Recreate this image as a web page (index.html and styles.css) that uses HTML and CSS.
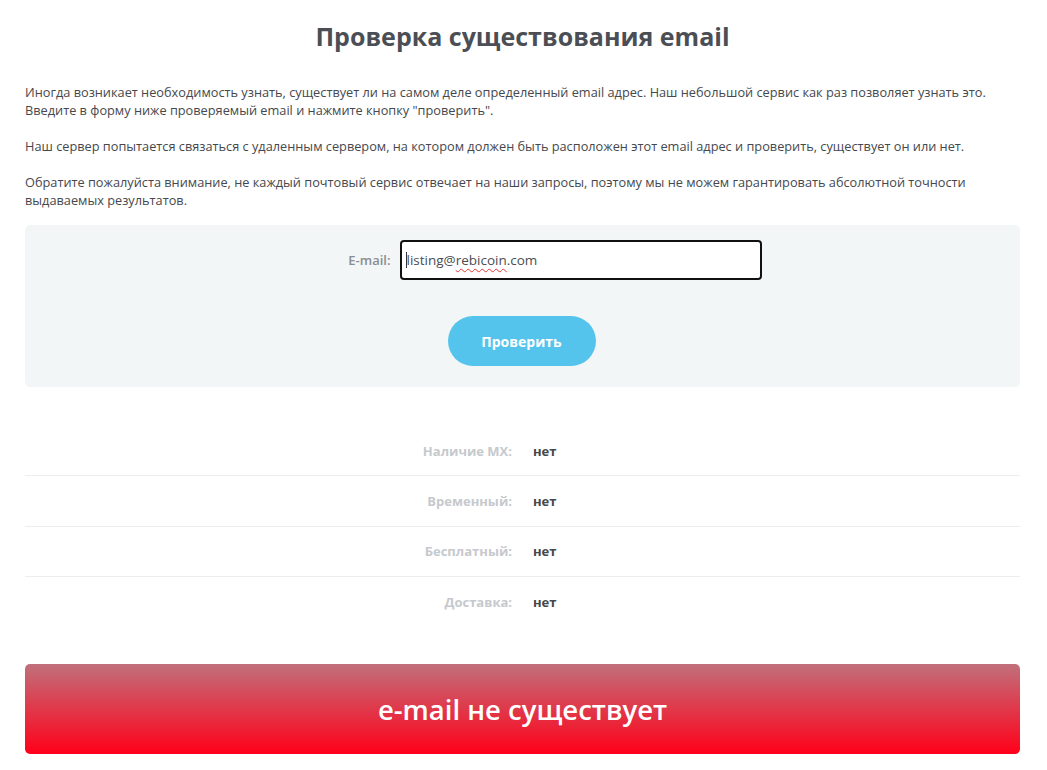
FILE: index.html
```html
<!DOCTYPE html>
<html lang="ru">
<head>
<meta charset="utf-8">
<title>Проверка существования email</title>
<link rel="stylesheet" href="styles.css">
</head>
<body>
<main class="page">
  <h1 class="title">Проверка существования email</h1>
  <div class="intro">
    <p>Иногда возникает необходимость узнать, существует ли на самом деле определенный email адрес. Наш небольшой сервис как раз позволяет узнать это. Введите в форму ниже проверяемый email и нажмите кнопку "проверить".</p>
    <p>Наш сервер попытается связаться с удаленным сервером, на котором должен быть расположен этот email адрес и проверить, существует он или нет.</p>
    <p>Обратите пожалуйста внимание, не каждый почтовый сервис отвечает на наши запросы, поэтому мы не можем гарантировать абсолютной точности выдаваемых результатов.</p>
  </div>
  <form class="form">
    <div class="field">
      <label class="label" for="email">E-mail:</label>
      <div class="input"><span class="caret"></span>listing@<span class="spell">rebicoin</span>.com</div>
    </div>
    <button type="button" class="btn">Проверить</button>
  </form>
  <div class="results">
    <div class="row"><div class="key">Наличие MX:</div><div class="val">нет</div></div>
    <div class="row"><div class="key">Временный:</div><div class="val">нет</div></div>
    <div class="row"><div class="key">Бесплатный:</div><div class="val">нет</div></div>
    <div class="row"><div class="key">Доставка:</div><div class="val">нет</div></div>
  </div>
  <div class="verdict">e-mail не существует</div>
</main>
</body>
</html>
```

FILE: styles.css
```css
* { box-sizing: border-box; }
html, body { margin: 0; padding: 0; background: #fff; }
body { font-family: "Open Sans", "Noto Sans", sans-serif; color: #45484d; }
.page { width: 995px; margin: 0 0 0 25px; padding-top: 18px; }
.title {
  margin: 0;
  text-align: center;
  font-size: 25px;
  line-height: 36px;
  font-weight: 700;
  color: #4b4f55;
}
.intro { padding-top: 29px; }
.intro p {
  margin: 0 0 18px;
  font-size: 12.75px;
  line-height: 18px;
  color: #45484d;
}
.intro p:last-child { margin-bottom: 16px; }
.form {
  background: #f3f6f7;
  border-radius: 5px;
  padding: 15px 0 21px;
  display: flex;
  flex-direction: column;
  align-items: center;
}
.field { display: flex; align-items: center; gap: 9px; margin-left: 47px; }
.label { font-size: 13px; font-weight: 600; color: #8a8d90; width: 60px; text-align: right; }
.input {
  width: 362px;
  height: 40px;
  border: 2px solid #111;
  border-radius: 4px;
  background: #fff;
  font-size: 13.5px;
  color: #4a4d52;
  display: flex;
  align-items: center;
  padding-left: 4px;
}
.caret { width: 1px; height: 16px; background: #333; }
.spell { text-decoration: underline wavy #e53935; text-decoration-thickness: 1px; text-underline-offset: 3px; }
.btn {
  margin-top: 36px;
  width: 148px;
  height: 50px;
  border: 0;
  border-radius: 25px;
  background: #55c4ec;
  color: #fff;
  font-family: inherit;
  font-size: 14px;
  font-weight: 700;
  margin-left: -2px;
}
.results { padding-top: 39px; }
.row {
  display: grid;
  grid-template-columns: 497px 1fr;
  height: 50.3px;
  align-items: center;
  border-bottom: 1px solid #ebedef;
}
.row:last-child { border-bottom: 0; }
.key { text-align: right; font-size: 13px; font-weight: 700; color: #c6c9cd; padding-right: 10px; }
.val { padding-left: 11px; font-size: 13px; font-weight: 700; color: #45484d; }
.verdict {
  margin-top: 37px;
  height: 90px;
  border-radius: 5px;
  background: linear-gradient(#c1707b, #ff0019);
  color: #fff;
  font-size: 27.5px;
  font-weight: 600;
  display: flex;
  align-items: center;
  justify-content: center;
}
```
